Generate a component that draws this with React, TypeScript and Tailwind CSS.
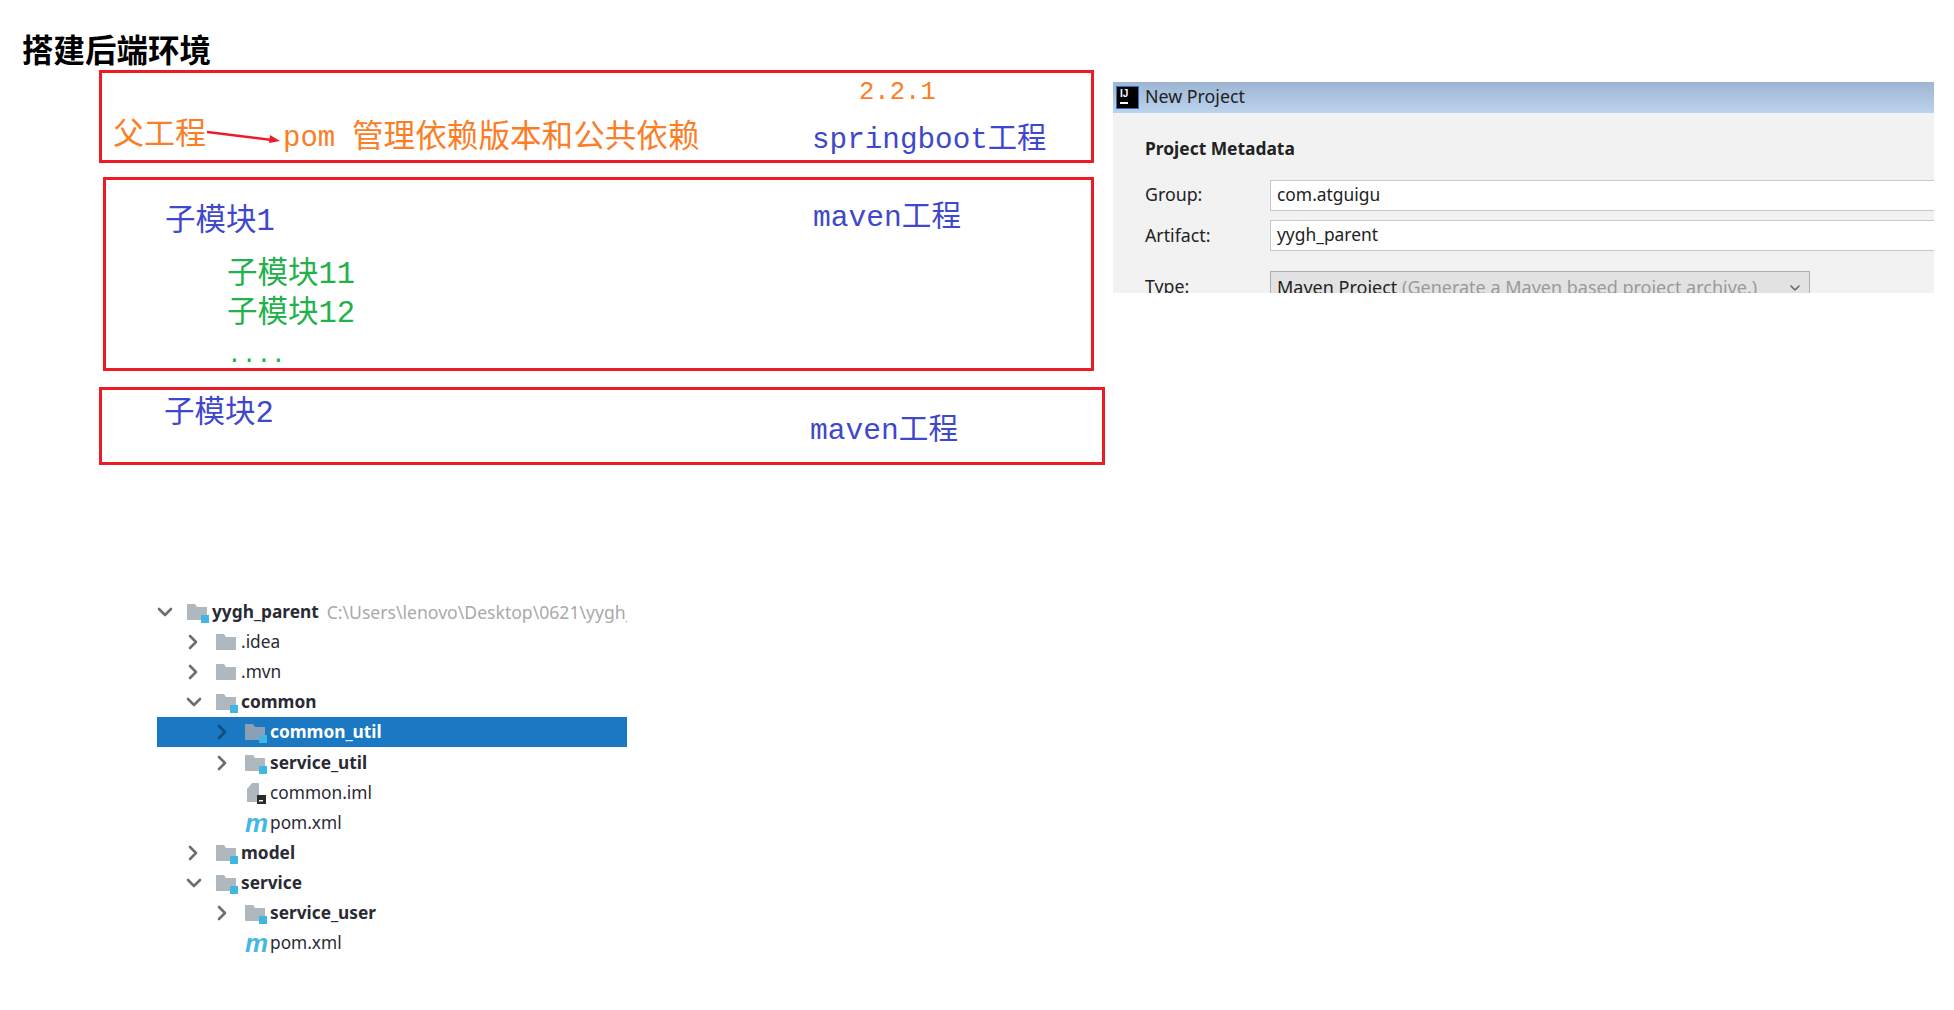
import {ChevronDown, ChevronRight} from 'lucide-react';

const cjk = "font-['Liberation_Mono','Noto_Sans_CJK_SC',monospace]";

function ModuleFolder({dim}: {dim?: boolean}) {
    return (
        <svg width="22" height="22" viewBox="0 0 22 22" className="shrink-0">
            <path d="M0 3h8l2 3h10v13H0z" fill={dim ? '#8aa0b4' : '#afb8bf'}/>
            <rect x="14" y="14" width="8" height="8" fill="#40b6e0"/>
        </svg>
    );
}

function PlainFolder() {
    return (
        <svg width="22" height="22" viewBox="0 0 22 22" className="shrink-0">
            <path d="M0 3h8l2 3h10v13H0z" fill="#afb8bf"/>
        </svg>
    );
}

function ImlFile() {
    return (
        <svg width="22" height="22" viewBox="0 0 22 22" className="shrink-0">
            <path d="M7 1h7v19H2V7z" fill="#afb8bf"/>
            <rect x="12" y="13" width="9" height="9" fill="#2b2b2b"/>
            <rect x="14" y="18" width="4" height="1.5" fill="#ffffff"/>
        </svg>
    );
}

type Row = {
    name: string;
    level: number;
    arrow?: 'open' | 'closed';
    icon: 'module' | 'folder' | 'iml' | 'maven';
    bold?: boolean;
    selected?: boolean;
    hint?: string;
};

const rows: Row[] = [
    {name: 'yygh_parent', level: 0, arrow: 'open', icon: 'module', bold: true, hint: 'C:\\Users\\lenovo\\Desktop\\0621\\yygh_parent'},
    {name: '.idea', level: 1, arrow: 'closed', icon: 'folder'},
    {name: '.mvn', level: 1, arrow: 'closed', icon: 'folder'},
    {name: 'common', level: 1, arrow: 'open', icon: 'module', bold: true},
    {name: 'common_util', level: 2, arrow: 'closed', icon: 'module', bold: true, selected: true},
    {name: 'service_util', level: 2, arrow: 'closed', icon: 'module', bold: true},
    {name: 'common.iml', level: 2, icon: 'iml'},
    {name: 'pom.xml', level: 2, icon: 'maven'},
    {name: 'model', level: 1, arrow: 'closed', icon: 'module', bold: true},
    {name: 'service', level: 1, arrow: 'open', icon: 'module', bold: true},
    {name: 'service_user', level: 2, arrow: 'closed', icon: 'module', bold: true},
    {name: 'pom.xml', level: 2, icon: 'maven'},
];

function TreeRow({row}: {row: Row}) {
    const indent = ['pl-0', 'pl-[29px]', 'pl-[58px]'][row.level];
    return (
        <div className={`h-[30.1px] flex items-center overflow-hidden whitespace-nowrap ${indent} ${row.selected ? 'bg-[#1b78c2]' : ''}`}>
            <span className="w-[30px] shrink-0 flex justify-start">
                {row.arrow === 'open' && <ChevronDown size={24} strokeWidth={2.6} className="-ml-[4px] shrink-0 text-[#6e6e6e]"/>}
                {row.arrow === 'closed' && <ChevronRight size={24} strokeWidth={2.6} className={`-ml-[5px] shrink-0 ${row.selected ? 'text-[#0f4f80]' : 'text-[#6e6e6e]'}`}/>}
            </span>
            {row.icon === 'module' && <ModuleFolder dim={row.selected}/>}
            {row.icon === 'folder' && <PlainFolder/>}
            {row.icon === 'iml' && <ImlFile/>}
            {row.icon === 'maven' && (
                <span className="w-[22px] shrink-0 text-center text-[26px] leading-[22px] italic font-bold text-[#45b8e2] font-['Liberation_Sans',sans-serif]">m</span>
            )}
            <span className={`ml-[3px] text-[17.3px] ${row.bold ? 'font-bold' : ''} ${row.selected ? 'text-white' : 'text-[#2a2a35]'}`}>{row.name}</span>
            {row.hint && <span className="ml-[8px] text-[17.6px] text-[#a9a9a9]">{row.hint}</span>}
        </div>
    );
}

function NewProject() {
    return (
        <div className="w-[821px] h-[211px] mt-[82px] ml-[8px] shrink-0 overflow-hidden bg-[#f2f2f2] font-['Noto_Sans',sans-serif] text-[#222222]">
            <div className="h-[31px] flex items-center pl-[3px] bg-gradient-to-b from-[#9db5d3] to-[#bbd3ec]">
                <div className="w-[23px] h-[23px] bg-black border border-[#2a6fc0] flex flex-col items-start pl-[3px] pt-[1px]">
                    <span className="text-[10px] leading-[11px] font-bold text-white font-['Liberation_Sans',sans-serif]">IJ</span>
                    <span className="mt-[3px] w-[8px] h-[2px] bg-white"/>
                </div>
                <span className="ml-[6px] -mt-[2px] text-[17.8px]">New Project</span>
            </div>
            <div className="pl-[32px] pt-[23px] text-[17.4px] font-bold leading-[24px]">Project Metadata</div>
            <div className="flex items-center pl-[32px] mt-[20px]">
                <span className="w-[125px] -mt-[2px] text-[17.8px]">Group:</span>
                <div className="flex-1 h-[31px] bg-white border border-[#c8c8c8] border-r-0 pl-[6px] text-[17.4px] leading-[27px]">com.atguigu</div>
            </div>
            <div className="flex items-center pl-[32px] mt-[9px]">
                <span className="w-[125px] text-[17.8px]">Artifact:</span>
                <div className="flex-1 h-[31px] bg-white border border-[#c8c8c8] border-r-0 pl-[6px] text-[17.4px] leading-[27px]">yygh_parent</div>
            </div>
            <div className="flex items-center pl-[32px] mt-[20px]">
                <span className="w-[125px] text-[17.8px]">Type:</span>
                <div className="w-[540px] h-[31px] bg-[#e2e2e2] border border-[#adadad] pl-[6px] pr-[6px] pt-[1px] text-[18px] leading-[28px] flex items-start justify-between">
                    <span>Maven Project <span className="text-[#9a9a9a]">(Generate a Maven based project archive.)</span></span>
                    <ChevronDown size={16} strokeWidth={2.4} className="mt-[7px] text-[#666666]"/>
                </div>
            </div>
        </div>
    );
}

export default function App() {
    return (
        <div className="min-h-screen w-full overflow-hidden bg-white">
            <div className="flex items-start">
                <div className={`w-[1105px] shrink-0 ${cjk}`}>
                    <h1 className="pt-[38px] pl-[22px] text-[31.5px] leading-[32px] font-bold text-black">搭建后端环境</h1>

                    <div className="ml-[99px] w-[995px] h-[93px] border-[3px] border-[#ed1c24]">
                        <div className="mt-[2px] ml-[757px] text-[25.6px] leading-[36px] text-[#fb7d26]">2.2.1</div>
                        <div className="mt-[10px] flex items-center h-[36px] whitespace-nowrap">
                            <span className="ml-[11px] w-[94px] -mt-[5px] text-[31px] text-[#fb7d26]">父工程</span>
                            <svg width="73" height="14" viewBox="0 0 73 14" className="shrink-0 -mt-[5px]">
                                <path d="M0 2L65 10" stroke="#ed1c24" strokeWidth="2.6"/>
                                <path d="M63 5L73 11L62 13z" fill="#ed1c24"/>
                            </svg>
                            <span className="ml-[3px] w-[69px] text-[29px] text-[#fb7d26]">pom</span>
                            <span className="w-[460px] text-[31.6px] text-[#fb7d26]">管理依赖版本和公共依赖</span>
                            <span className="mt-[4px] text-[29.3px] text-[#3f48cc]">springboot工程</span>
                        </div>
                    </div>

                    <div className="mt-[14px] ml-[103px] w-[991px] h-[194px] border-[3px] border-[#ed1c24] flex items-start">
                        <div className="w-[707px] shrink-0 pl-[59px] pt-[24px]">
                            <div className="text-[30.5px] leading-[36px] text-[#3f48cc]">子模块1</div>
                            <div className="mt-[17px] pl-[62px] text-[30.5px] leading-[36px] text-[#22b14c]">子模块11</div>
                            <div className="mt-[3px] pl-[62px] text-[30.5px] leading-[36px] text-[#22b14c]">子模块12</div>
                            <div className="mt-[10px] pl-[62px] text-[24.5px] leading-[28px] text-[#22b14c]">....</div>
                        </div>
                        <div className="pt-[20px] text-[29.6px] leading-[36px] text-[#3f48cc] whitespace-nowrap">maven工程</div>
                    </div>

                    <div className="mt-[16px] ml-[99px] w-[1006px] h-[78px] border-[3px] border-[#ed1c24] flex items-start">
                        <div className="w-[708px] shrink-0 pl-[62px] pt-[6px] text-[30.5px] leading-[36px] text-[#3f48cc]">子模块2</div>
                        <div className="pt-[23px] text-[29.6px] leading-[36px] text-[#3f48cc] whitespace-nowrap">maven工程</div>
                    </div>
                </div>
                <NewProject/>
            </div>

            <div className="mt-[132px] ml-[157px] w-[470px] font-['Noto_Sans',sans-serif]">
                {rows.map((row, index) => (
                    <TreeRow key={index} row={row}/>
                ))}
            </div>
        </div>
    );
}
